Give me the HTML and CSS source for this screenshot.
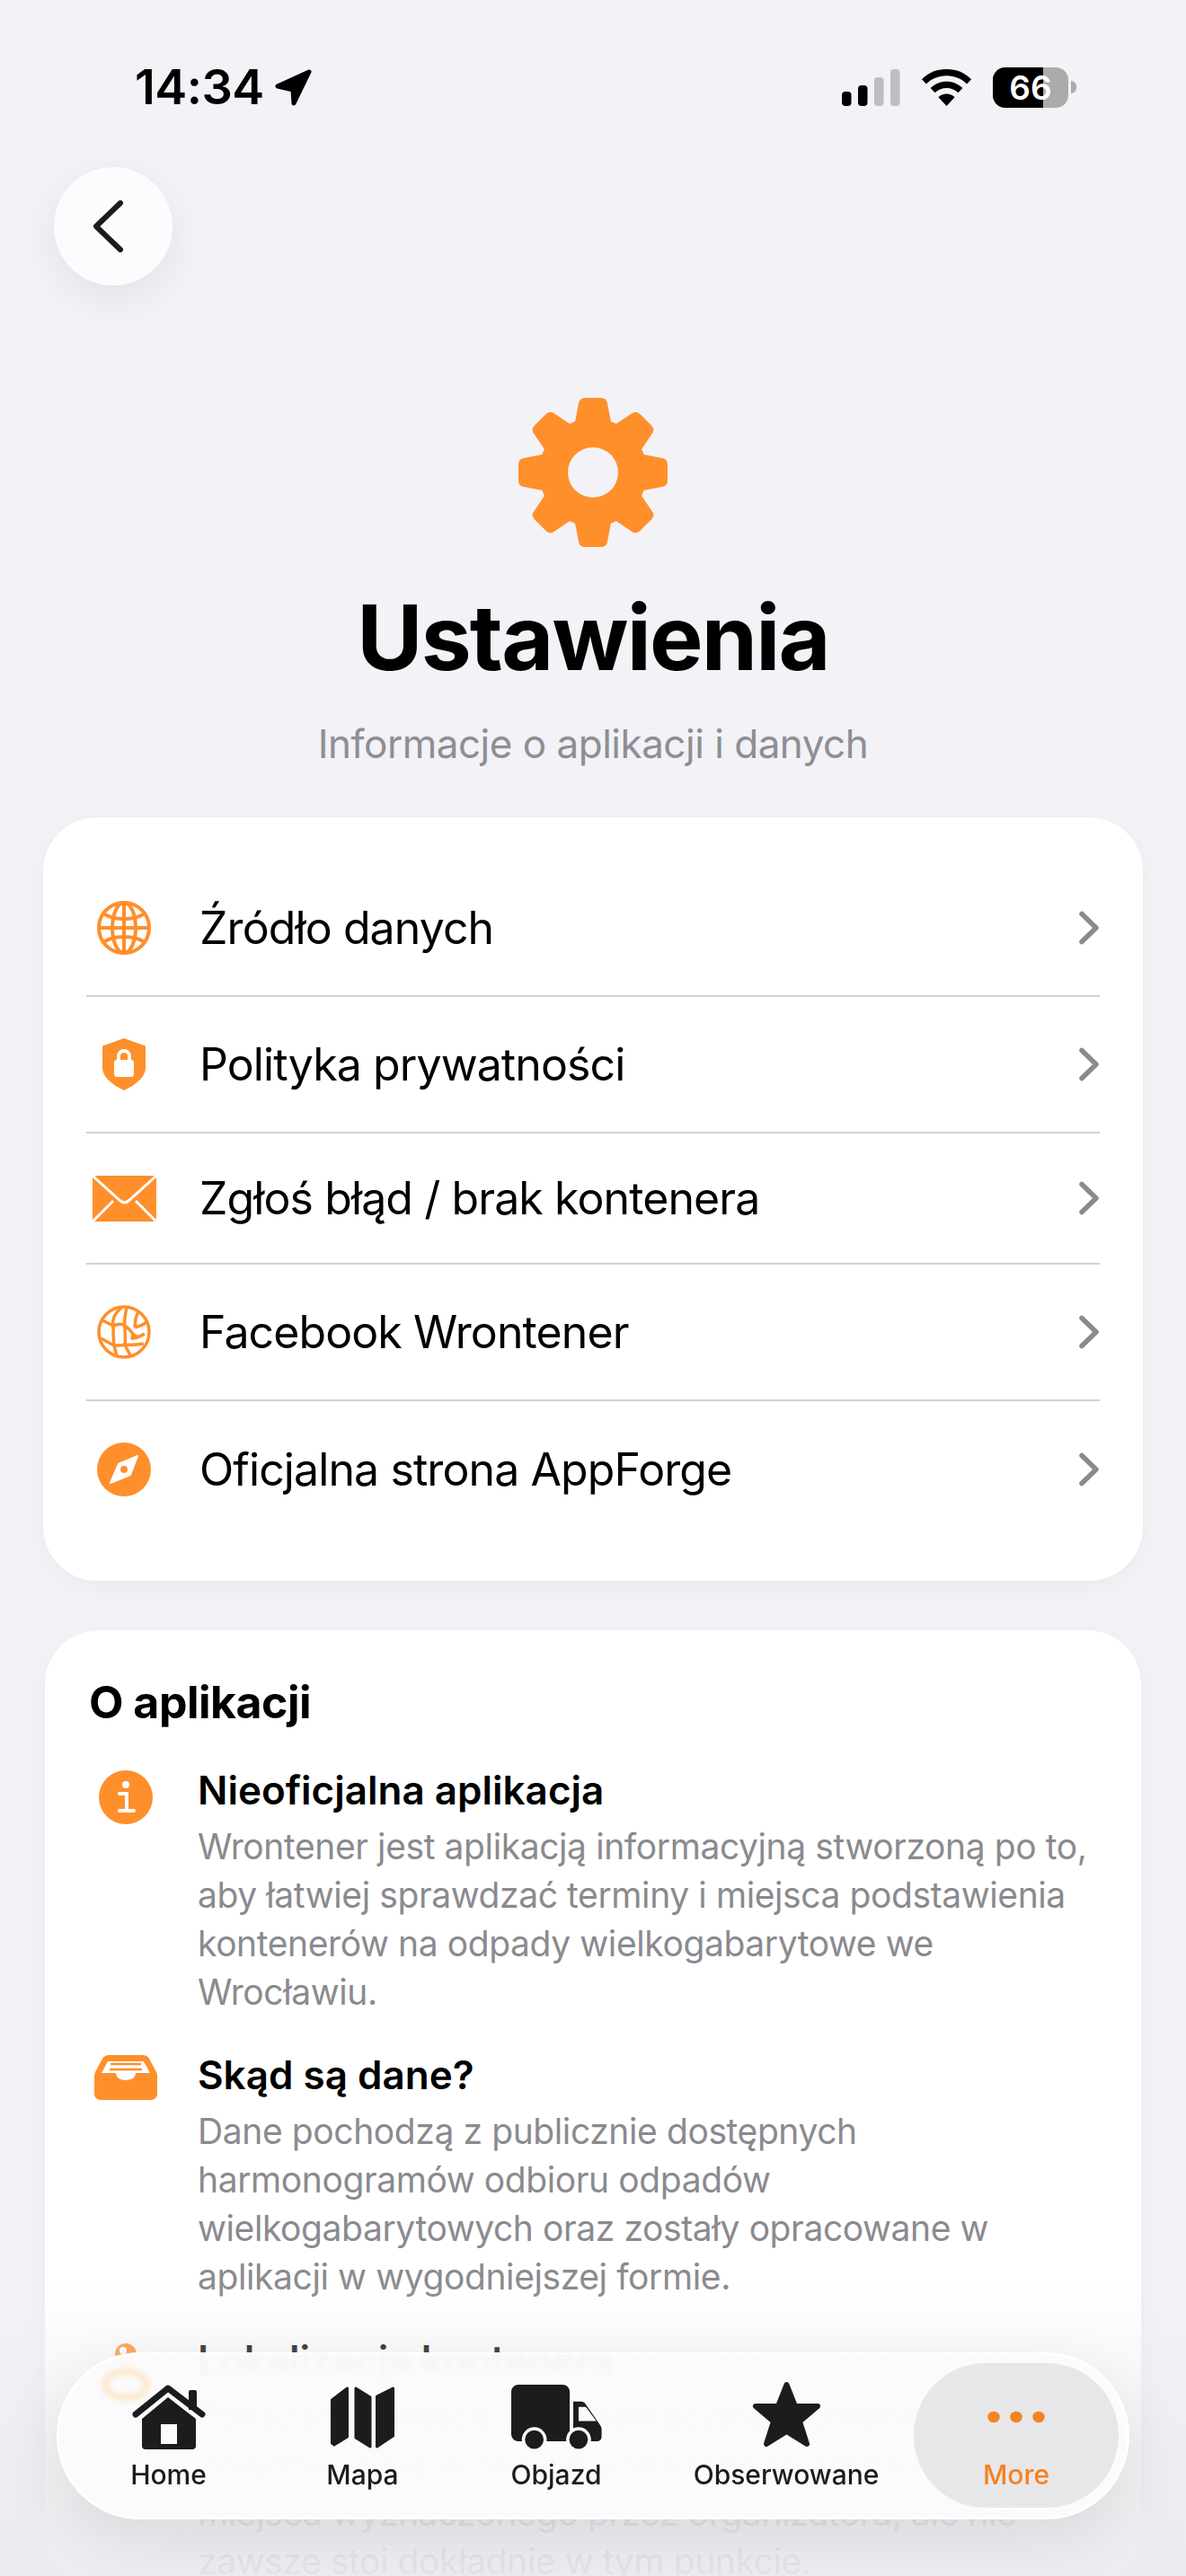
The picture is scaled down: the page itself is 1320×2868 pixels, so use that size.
FILE: index.html
```html
<!DOCTYPE html>
<html lang="pl">
<head>
    <meta charset="UTF-8">
    <meta name="viewport" content="width=device-width, initial-scale=1.0">
    <title>Ustawienia</title>
    <link rel="stylesheet" href="styles.css">
</head>
<body>
    <div class="ekran">
        <!-- pasek statusu -->
        <div class="status">
            <div class="czas">
                <span>14:34</span>
                <svg class="strzalka" viewBox="0 0 41 41"><path d="M38 3 3 19l17 4 1 15z" stroke="#000" stroke-width="5" stroke-linejoin="round"/></svg>
            </div>
            <div class="status-ikony">
                <svg class="zasieg" viewBox="0 0 65 41">
                    <rect x="0" y="25" width="10.5" height="16" rx="4"/>
                    <rect x="18" y="18" width="10.5" height="23" rx="4"/>
                    <rect x="36" y="9" width="10.5" height="32" rx="4" fill="#bdbdc2"/>
                    <rect x="54" y="0" width="10.5" height="41" rx="4" fill="#bdbdc2"/>
                </svg>
                <svg class="wifi" viewBox="0 0 58 42"><path d="M29 0C18 0 8 4 .8 11.5l5 5.5C11.7 11 20 7.5 29 7.5s17.3 3.5 23.2 9.5l5-5.5C50 4 40 0 29 0zm0 14c-7 0-13.5 2.7-18.3 7.5l5 5.4c3.5-3.4 8.2-5.4 13.3-5.4s9.8 2 13.3 5.4l5-5.4C42.5 16.7 36 14 29 14zm0 14.2c-3.5 0-6.8 1.3-9.3 3.7L29 42l9.3-10.1c-2.5-2.4-5.8-3.7-9.3-3.7z"/></svg>
                <div class="bateria">
                    <div class="bateria-poziom"></div>
                    <span>66</span>
                </div>
                <div class="bateria-czubek"></div>
            </div>
        </div>

        <div class="tresc">
            <button class="wstecz">
                <svg viewBox="0 0 36 58"><path d="M30 3 3 29l27 26" fill="none" stroke="#1c1c1e" stroke-width="6" stroke-linecap="round" stroke-linejoin="round"/></svg>
            </button>

            <div class="naglowek">
                <svg class="zebatka" viewBox="0 0 166 166">
                    <defs><path id="zab" d="M62 32 67 6Q68 0 74 0H92Q98 0 99 6L104 32Z"/></defs>
                    <circle cx="83" cy="83" r="60"/>
                    <use href="#zab"/>
                    <use href="#zab" transform="rotate(45 83 83)"/>
                    <use href="#zab" transform="rotate(90 83 83)"/>
                    <use href="#zab" transform="rotate(135 83 83)"/>
                    <use href="#zab" transform="rotate(180 83 83)"/>
                    <use href="#zab" transform="rotate(225 83 83)"/>
                    <use href="#zab" transform="rotate(270 83 83)"/>
                    <use href="#zab" transform="rotate(315 83 83)"/>
                    <circle cx="83" cy="83" r="28" fill="#f2f2f7"/>
                </svg>
                <h1>Ustawienia</h1>
                <p>Informacje o aplikacji i danych</p>
            </div>

            <div class="karta lista">
                <a class="wiersz">
                    <svg class="ikona" viewBox="0 0 60 60"><g fill="none" stroke="#ff8f2b" stroke-width="4"><circle cx="30" cy="30" r="28"/><ellipse cx="30" cy="30" rx="13" ry="28"/><path d="M30 2v56M2 30h56M7 14c6 4 14 6 23 6s17-2 23-6M7 46c6-4 14-6 23-6s17 2 23 6"/></g></svg>
                    <span>Źródło danych</span>
                    <svg class="chevron" viewBox="0 0 24 38"><path d="M4 3.5 20 19 4 34.5" fill="none" stroke="#8a8a8e" stroke-width="5.5" stroke-linecap="round" stroke-linejoin="round"/></svg>
                </a>
                <a class="wiersz">
                    <svg class="ikona" viewBox="0 0 60 60"><path d="M30 1 6 9.5V34c0 10 11 19 24 25 13-6 24-15 24-25V9.5z" fill="#ff8f2b"/><path d="M22 26v-5a8 8 0 0 1 16 0v5h-4v-5a4 4 0 0 0-8 0v5z" fill="#fff"/><rect x="19" y="25" width="22" height="19" rx="3" fill="#fff"/></svg>
                    <span>Polityka prywatności</span>
                    <svg class="chevron" viewBox="0 0 24 38"><path d="M4 3.5 20 19 4 34.5" fill="none" stroke="#8a8a8e" stroke-width="5.5" stroke-linecap="round" stroke-linejoin="round"/></svg>
                </a>
                <a class="wiersz niski">
                    <svg class="ikona koperta" viewBox="0 0 71 51"><rect x="0" y="0" width="71" height="51" rx="4" fill="#ff8f2b"/><path d="M1 1l30 27c3 2.5 6 2.5 9 0L70 1M1 50l22-22M70 50 48 28" fill="none" stroke="#fff" stroke-width="3"/></svg>
                    <span>Zgłoś błąd / brak kontenera</span>
                    <svg class="chevron" viewBox="0 0 24 38"><path d="M4 3.5 20 19 4 34.5" fill="none" stroke="#8a8a8e" stroke-width="5.5" stroke-linecap="round" stroke-linejoin="round"/></svg>
                </a>
                <a class="wiersz">
                    <svg class="ikona" viewBox="0 0 60 60"><g fill="none" stroke="#ff8f2b" stroke-width="3.5" stroke-linejoin="round"><circle cx="30" cy="30" r="28"/><path d="M27 3C20 9 16 15 18 23c0 7 0 14 1 22l3 12M33 3c-2 8-3 14-2 23 0 7 1 13 0 18l6 12M6 17l12 6c5-2 9-3 13 0 3 2 6 5 9 9l6 5M46 7l-3 8-1 10M42 25c4-1 10-3 14-7M40 32l-1 5c5 0 10-3 14-5M4 37c5 2 10 6 15 8 5 0 9 0 12-1 7 1 14 0 21-1"/></g><g fill="#ff8f2b"><circle cx="18" cy="23" r="2.5"/><circle cx="31" cy="44" r="2.5"/></g></svg>
                    <span>Facebook Wrontener</span>
                    <svg class="chevron" viewBox="0 0 24 38"><path d="M4 3.5 20 19 4 34.5" fill="none" stroke="#8a8a8e" stroke-width="5.5" stroke-linecap="round" stroke-linejoin="round"/></svg>
                </a>
                <a class="wiersz ostatni">
                    <svg class="ikona" viewBox="0 0 60 60"><circle cx="30" cy="30" r="30" fill="#ff8f2b"/><path d="M45 15 37 36 15 45l9-21z" fill="#fff" stroke="#fff" stroke-width="2" stroke-linejoin="round"/><circle cx="30" cy="30" r="4" fill="#ff8f2b"/></svg>
                    <span>Oficjalna strona AppForge</span>
                    <svg class="chevron" viewBox="0 0 24 38"><path d="M4 3.5 20 19 4 34.5" fill="none" stroke="#8a8a8e" stroke-width="5.5" stroke-linecap="round" stroke-linejoin="round"/></svg>
                </a>
            </div>

            <div class="karta info">
                <h2>O aplikacji</h2>
                <div class="punkt">
                    <svg class="ikona" viewBox="0 0 60 60"><circle cx="30" cy="30" r="30" fill="#ff8f2b"/><circle cx="30" cy="16" r="4" fill="#fff"/><path d="M23 26h8v18M23 45h16" fill="none" stroke="#fff" stroke-width="4" stroke-linecap="round" stroke-linejoin="round"/></svg>
                    <div>
                        <h3>Nieoficjalna aplikacja</h3>
                        <p>Wrontener jest aplikacją informacyjną stworzoną po to, aby łatwiej sprawdzać terminy i miejsca podstawienia kontenerów na odpady wielkogabarytowe we Wrocławiu.</p>
                    </div>
                </div>
                <div class="punkt">
                    <svg class="ikona szuflada" viewBox="0 0 70 50"><path d="M16 0h38c3 0 5 1 7 4l7 13c1 2 2 4 2 6v20c0 4-3 7-7 7H7c-4 0-7-3-7-7V23c0-2 1-4 2-6L9 4c2-3 4-4 7-4z" fill="#ff8f2b"/><path d="M15 7h40l7 13H46c0 5-5 8-11 8s-11-3-11-8H8z" fill="#fff"/><path d="M18 10h34M17 16h36" stroke="#ff8f2b" stroke-width="2.5"/></svg>
                    <div>
                        <h3>Skąd są dane?</h3>
                        <p>Dane pochodzą z publicznie dostępnych harmonogramów odbioru odpadów wielkogabarytowych oraz zostały opracowane w aplikacji w wygodniejszej formie.</p>
                    </div>
                </div>
                <div class="punkt">
                    <svg class="ikona pinezka" viewBox="0 0 60 60"><path d="M30 0c-6.6 0-12 5.4-12 12 0 10 12 26 12 26s12-16 12-26c0-6.6-5.4-12-12-12z" fill="#ff8f2b"/><circle cx="27" cy="8" r="4" fill="#fff"/></svg>
                    <div>
                        <h3>Lokalizacja kontenera</h3>
                        <p>Pokazane miejsce jest orientacyjne. Kontener może znajdować się w rejonie wskazanego adresu lub miejsca wyznaczonego przez organizatora, ale nie zawsze stoi dokładnie w tym punkcie.</p>
                    </div>
                </div>
            </div>
        </div>

        <!-- zanikanie pod paskiem -->
        <div class="zanik"></div>

        <nav class="tabbar">
            <div class="plama"></div>
            <a class="tab">
                <svg viewBox="0 0 82 72"><path d="M63 8a2 2 0 0 1 2-2h5a2 2 0 0 1 2 2v20H63z"/><path d="M4 33 40 4l38 29" fill="none" stroke="#1c1c1e" stroke-width="7" stroke-linecap="round" stroke-linejoin="round"/><path fill-rule="evenodd" d="M40 14 71 38v30a4 4 0 0 1-4 4H15a4 4 0 0 1-4-4V38zM32 44v22h18V44z"/></svg>
                <span>Home</span>
            </a>
            <a class="tab">
                <svg viewBox="0 0 71 72"><path stroke="#1c1c1e" stroke-width="3" stroke-linejoin="round" d="M1.5 17 18.5 4v54L4 67l-2.5-2zM28 4l16 10v55L28 59zM51.5 13 69.5 4v53L51.5 69z"/></svg>
                <span>Mapa</span>
            </a>
            <a class="tab">
                <svg viewBox="0 0 102 73"><path fill-rule="evenodd" d="M8 0h50a8 8 0 0 1 8 8v56H8a8 8 0 0 1-8-8V8a8 8 0 0 1 8-8zM70 19h9c2 0 4 1 5 3l16 23c1 2 2 3 2 5v8c0 4-2 6-6 6H70zm6 6v16h20L85 26c-1-1-2-1-3-1z"/><circle cx="26" cy="62" r="14" fill="#fbfbfd"/><circle cx="26" cy="62" r="10.5"/><circle cx="76" cy="62" r="14" fill="#fbfbfd"/><circle cx="76" cy="62" r="10.5"/></svg>
                <span>Objazd</span>
            </a>
            <a class="tab">
                <svg class="gwiazda" viewBox="0 3 75 72"><path stroke="#1c1c1e" stroke-width="6" stroke-linejoin="round" d="M37.5 3 47 27h25L52 44l8 25-22.5-14L15 69l8-25L3 27h25z"/></svg>
                <span>Obserwowane</span>
            </a>
            <a class="tab aktywny">
                <svg viewBox="0 0 80 72"><g fill="#f5821f"><ellipse cx="15" cy="36" rx="6.7" ry="6.2"/><ellipse cx="40" cy="36" rx="6.7" ry="6.2"/><ellipse cx="65" cy="36" rx="6.7" ry="6.2"/></g></svg>
                <span>More</span>
            </a>
        </nav>
    </div>
</body>
</html>
```

FILE: styles.css
```css
* {
    box-sizing: border-box;
}

body {
    margin: 0;
    font-family: Inter, "Noto Sans", sans-serif;
    background-color: #f2f2f7;
    color: #000;
}

.ekran {
    position: relative;
    width: 1320px;
    height: 2868px;
    overflow: hidden;
}

/* Pasek statusu */
.status {
    height: 186px;
    padding: 72px 122px 0 150px;
    display: flex;
    justify-content: space-between;
    align-items: flex-start;
}

.czas {
    display: flex;
    align-items: center;
    gap: 12px;
    font-size: 54px;
    font-weight: 600;
    line-height: 50px;
    letter-spacing: -0.5px;
}

.strzalka {
    width: 41px;
    height: 41px;
}

.status-ikony {
    display: flex;
    align-items: center;
    gap: 23px;
    height: 50px;
}

.zasieg {
    width: 65px;
    height: 41px;
}

.wifi {
    width: 57px;
    height: 41px;
}

.bateria {
    position: relative;
    width: 84px;
    height: 45px;
    border-radius: 14px;
    overflow: hidden;
    background-color: #ababab;
    color: #fff;
    font-size: 37px;
    font-weight: 600;
    line-height: 45px;
    text-align: center;
}

.bateria-poziom {
    position: absolute;
    left: 0;
    top: 0;
    bottom: 0;
    width: 56px;
    background-color: #000;
}

.bateria span {
    position: relative;
}

.bateria-czubek {
    width: 6px;
    height: 14px;
    margin-left: -20px;
    border-radius: 0 6px 6px 0;
    background-color: #ababab;
}

.tresc {
    padding: 0 48px;
}

.wstecz {
    display: block;
    width: 132px;
    height: 132px;
    margin-left: 12px;
    padding: 0;
    border: none;
    border-radius: 50%;
    background-color: #fcfcfe;
    box-shadow: 0 14px 50px rgba(0, 0, 0, 0.07);
}

.wstecz svg {
    display: block;
    width: 36px;
    height: 58px;
    margin-left: 44px;
}

.naglowek {
    padding-top: 125px;
    text-align: center;
}

.zebatka {
    display: block;
    width: 166px;
    height: 166px;
    margin: 0 auto;
    fill: #ff8f2b;
}

h1 {
    margin: 36px 0 0;
    font-size: 100px;
    font-weight: 700;
    line-height: 130px;
    letter-spacing: -1.8px;
}

.naglowek p {
    margin: 26px 0 0;
    font-size: 44px;
    line-height: 54px;
    letter-spacing: -0.5px;
    color: #8e8e93;
}

.karta {
    background-color: #fff;
    border-radius: 60px;
    box-shadow: 0 6px 30px rgba(0, 0, 0, 0.04);
}

.lista {
    margin-top: 55px;
    padding: 48px 48px 0;
    height: 850px;
}

.wiersz {
    display: flex;
    align-items: center;
    height: 152px;
    border-bottom: 2px solid #d1d1d4;
    font-size: 50px;
    letter-spacing: -0.9px;
}

.wiersz.niski {
    height: 146px;
}

.wiersz.ostatni {
    border-bottom: none;
}

.wiersz span {
    flex: 1;
}

.ikona {
    flex: none;
    width: 60px;
    height: 60px;
}

.wiersz .ikona {
    margin: 0 54px 0 12px;
}

.wiersz .koperta {
    width: 71px;
    height: 51px;
    margin: 0 48px 0 7px;
}

.chevron {
    flex: none;
    width: 24px;
    height: 38px;
}

.info {
    margin: 55px 2px 0;
    padding: 50px 49px 0;
}

h2 {
    margin: 0;
    font-size: 50px;
    font-weight: 700;
    line-height: 60px;
    letter-spacing: -0.5px;
}

.punkt {
    display: flex;
    gap: 50px;
    margin-top: 40px;
}

.punkt + .punkt {
    margin-top: 37px;
}

.punkt > .ikona {
    margin: 6px 0 0 11px;
}

.punkt > .szuflada {
    width: 70px;
    height: 50px;
    margin: 6px -5px 0 6px;
}

.punkt > .pinezka {
    margin-top: 10px;
}

h3 {
    margin: 0;
    font-size: 44px;
    font-weight: 600;
    line-height: 56px;
}

.punkt p {
    width: 1000px;
    margin: 8px 0 0;
    font-size: 39px;
    line-height: 54px;
    letter-spacing: -0.4px;
    color: #8a8a8e;
}

/* Zanikanie tresci pod paskiem zakladek */
.zanik {
    position: absolute;
    left: 0;
    right: 0;
    bottom: 0;
    height: 328px;
    background: linear-gradient(rgba(236, 236, 240, 0), rgba(236, 236, 240, 0.28) 22%, rgba(236, 236, 240, 0.88) 82%, rgba(236, 236, 240, 0.92));
}

/* Pasek zakladek */
.tabbar {
    position: absolute;
    left: 63px;
    top: 2619px;
    width: 1194px;
    height: 186px;
    padding: 12px 12px 13px 16px;
    display: grid;
    grid-template-columns: 217px 215px 216px 296px 1fr;
    border-radius: 93px;
    background-color: rgba(251, 251, 253, 0.965);
    box-shadow: 0 20px 70px rgba(0, 0, 0, 0.09), inset 0 0 0 3px rgba(255, 255, 255, 0.6);
    backdrop-filter: blur(3px);
}

/* odbicie ikony w szkle paska */
.plama {
    position: absolute;
    left: 50px;
    top: 18px;
    width: 54px;
    height: 36px;
    border: 7px solid #fde6c6;
    border-radius: 50%;
    filter: blur(3px);
}

.tab {
    position: relative;
    display: flex;
    flex-direction: column;
    align-items: center;
    padding-top: 24px;
    font-size: 30px;
    font-weight: 500;
    color: #1c1c1e;
    fill: #1c1c1e;
}

.tab svg {
    display: block;
    height: 72px;
    overflow: visible;
}

.tab span {
    margin-top: 8px;
    line-height: 40px;
}

.tab.aktywny {
    margin-left: -6px;
    border-radius: 80px;
    background-color: rgba(230, 230, 233, 0.95);
    color: #f5821f;
}
```
